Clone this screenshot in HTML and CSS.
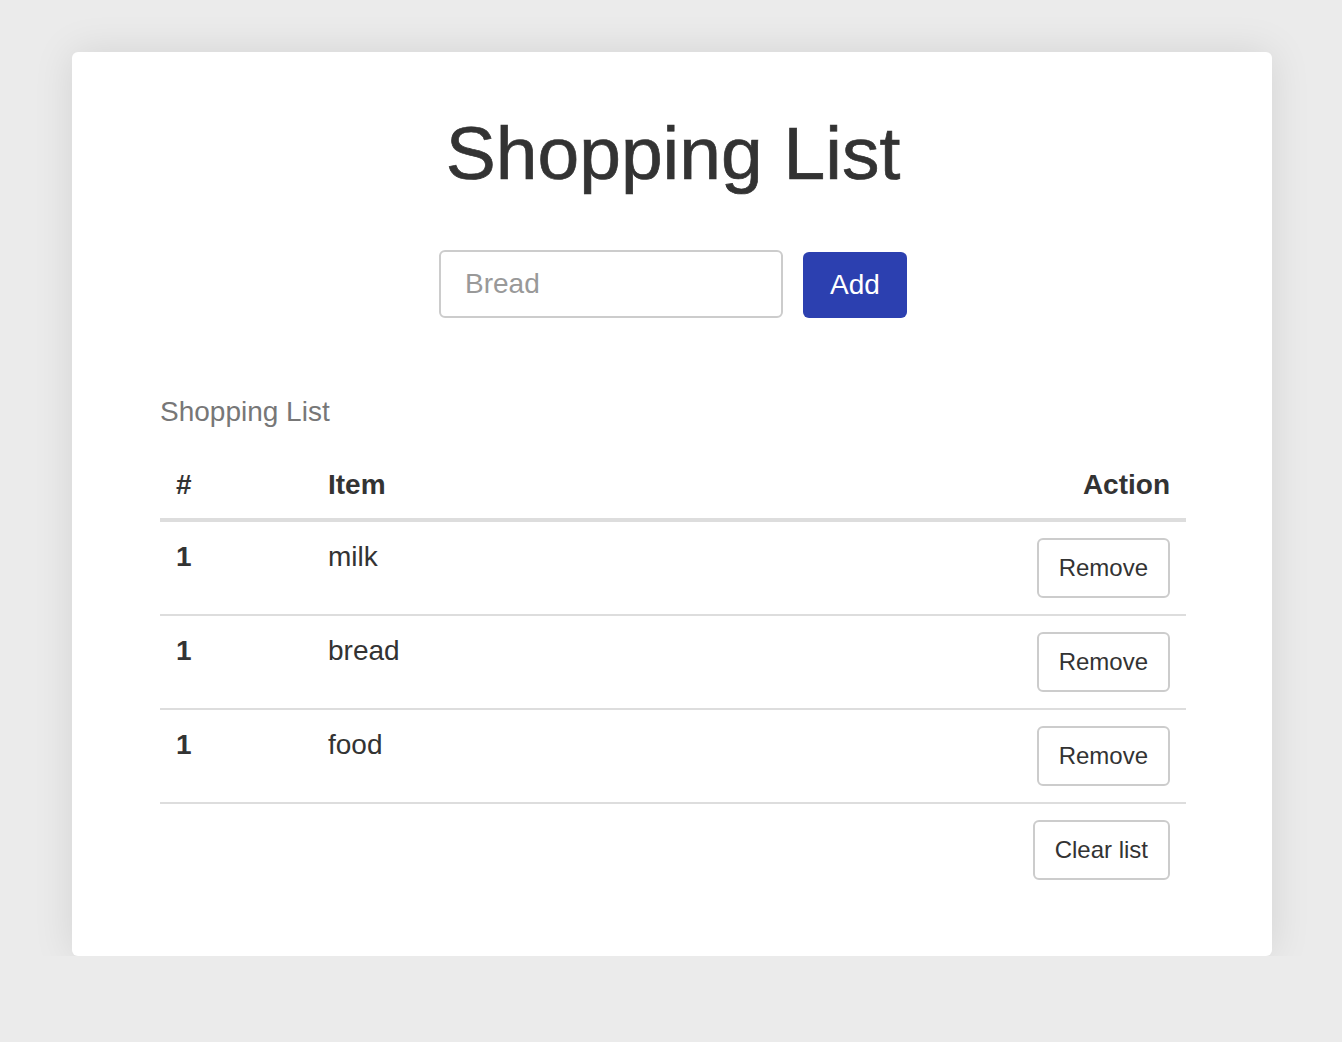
FILE: index.html
```html
<!DOCTYPE html>
<html lang="en">
<head>
<meta charset="utf-8">
<title>Shopping List</title>
<link rel="stylesheet" href="styles.css">
</head>
<body>
  <main class="card">
    <h1 class="title">Shopping List</h1>
    <form class="add-form" onsubmit="return false;">
      <input class="add-input" type="text" placeholder="Bread">
      <button class="btn-primary" type="submit">Add</button>
    </form>
    <table class="list">
      <caption class="list-caption">Shopping List</caption>
      <thead>
        <tr>
          <th class="col-num">#</th>
          <th class="col-item">Item</th>
          <th class="col-action">Action</th>
        </tr>
      </thead>
      <tbody>
        <tr>
          <th class="col-num">1</th>
          <td class="col-item">milk</td>
          <td class="col-action"><button class="btn-default">Remove</button></td>
        </tr>
        <tr>
          <th class="col-num">1</th>
          <td class="col-item">bread</td>
          <td class="col-action"><button class="btn-default">Remove</button></td>
        </tr>
        <tr>
          <th class="col-num">1</th>
          <td class="col-item">food</td>
          <td class="col-action"><button class="btn-default">Remove</button></td>
        </tr>
      </tbody>
    </table>
    <div class="list-footer">
      <button class="btn-default">Clear list</button>
    </div>
  </main>
</body>
</html>
```
FILE: styles.css
```css
* {
  box-sizing: border-box;
}

html, body {
  margin: 0;
  padding: 0;
}

body {
  background: #ebebeb;
  font-family: "Liberation Sans", Helvetica, Arial, sans-serif;
  color: #333333;
}

.card {
  width: 1200px;
  margin: 52px 0 0 72px;
  background: #ffffff;
  border-radius: 6px;
  box-shadow: 0 0 40px rgba(0, 0, 0, 0.1);
  padding: 61px 86px 76px 88px;
}

.title {
  margin: 0;
  text-align: center;
  font-size: 75px;
  line-height: 80px;
  font-weight: 500;
  color: #333333;
  -webkit-text-stroke: 0.7px #333333;
}

.add-form {
  margin: 57px 0 0;
  display: flex;
  justify-content: center;
  align-items: flex-end;
  gap: 20px;
}

.add-input {
  width: 344px;
  height: 68px;
  border: 2px solid #cccccc;
  border-radius: 6px;
  padding: 0 24px;
  font-family: inherit;
  font-size: 28px;
  color: #333333;
  outline: none;
}

.add-input::placeholder {
  color: #999999;
}

.btn-primary {
  width: 104px;
  height: 66px;
  border: none;
  border-radius: 6px;
  background: #2c40b0;
  color: #ffffff;
  font-family: inherit;
  font-size: 28px;
  padding: 0;
  cursor: pointer;
}

.list {
  width: 100%;
  border-collapse: collapse;
  margin-top: 77px;
  font-size: 28px;
}

.list-caption {
  caption-side: top;
  text-align: left;
  color: #777777;
  font-size: 28px;
  line-height: 34px;
  padding: 0 0 23px;
}

.list th,
.list td {
  padding: 16px;
  line-height: 34px;
  vertical-align: top;
  text-align: left;
}

.list tbody th,
.list tbody td.col-item {
  line-height: 38px;
}

.list thead th {
  font-weight: bold;
  border-bottom: 4px solid #dddddd;
}

.list tbody tr {
  border-bottom: 2px solid #dddddd;
}

.list tbody th {
  font-weight: bold;
}

.col-num {
  width: 152px;
}

.list .col-action {
  text-align: right;
}

.btn-default {
  background: #ffffff;
  border: 2px solid #cccccc;
  border-radius: 6px;
  padding: 11px 20px;
  font-family: inherit;
  font-size: 24px;
  line-height: 34px;
  color: #333333;
  cursor: pointer;
}

.list-footer {
  display: flex;
  justify-content: flex-end;
  padding: 16px 16px 0;
}
```
